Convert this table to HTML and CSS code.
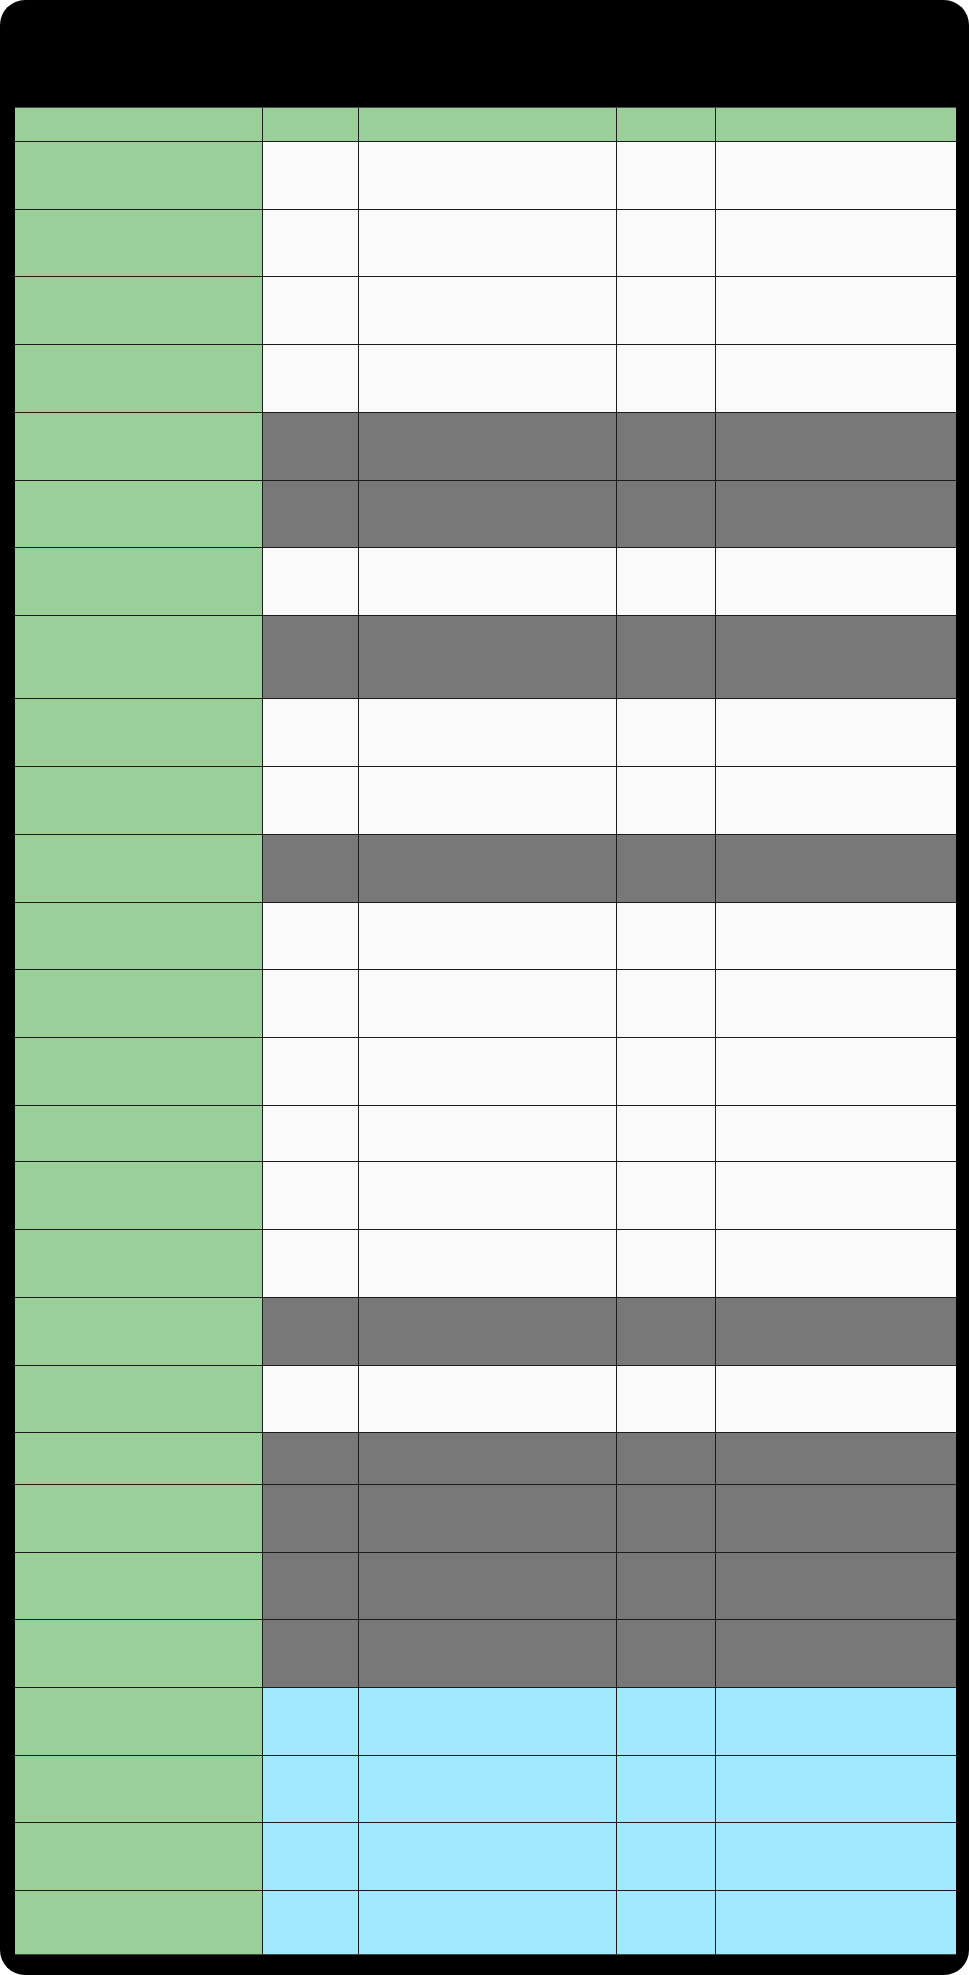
FILE: index.html
```html
<!DOCTYPE html>
<html lang="en">
<head>
<meta charset="utf-8">
<title>Table</title>
<link rel="stylesheet" href="styles.css">
</head>
<body>
<div class="frame">
  <div class="grid">
    <div class="row head"><span class="cell"></span><span class="cell"></span><span class="cell"></span><span class="cell"></span><span class="cell"></span></div>
    <div class="row light"><span class="cell"></span><span class="cell"></span><span class="cell"></span><span class="cell"></span><span class="cell"></span></div>
    <div class="row light"><span class="cell"></span><span class="cell"></span><span class="cell"></span><span class="cell"></span><span class="cell"></span></div>
    <div class="row light"><span class="cell"></span><span class="cell"></span><span class="cell"></span><span class="cell"></span><span class="cell"></span></div>
    <div class="row light"><span class="cell"></span><span class="cell"></span><span class="cell"></span><span class="cell"></span><span class="cell"></span></div>
    <div class="row dark"><span class="cell"></span><span class="cell"></span><span class="cell"></span><span class="cell"></span><span class="cell"></span></div>
    <div class="row dark"><span class="cell"></span><span class="cell"></span><span class="cell"></span><span class="cell"></span><span class="cell"></span></div>
    <div class="row light"><span class="cell"></span><span class="cell"></span><span class="cell"></span><span class="cell"></span><span class="cell"></span></div>
    <div class="row dark"><span class="cell"></span><span class="cell"></span><span class="cell"></span><span class="cell"></span><span class="cell"></span></div>
    <div class="row light"><span class="cell"></span><span class="cell"></span><span class="cell"></span><span class="cell"></span><span class="cell"></span></div>
    <div class="row light"><span class="cell"></span><span class="cell"></span><span class="cell"></span><span class="cell"></span><span class="cell"></span></div>
    <div class="row dark"><span class="cell"></span><span class="cell"></span><span class="cell"></span><span class="cell"></span><span class="cell"></span></div>
    <div class="row light"><span class="cell"></span><span class="cell"></span><span class="cell"></span><span class="cell"></span><span class="cell"></span></div>
    <div class="row light"><span class="cell"></span><span class="cell"></span><span class="cell"></span><span class="cell"></span><span class="cell"></span></div>
    <div class="row light"><span class="cell"></span><span class="cell"></span><span class="cell"></span><span class="cell"></span><span class="cell"></span></div>
    <div class="row light"><span class="cell"></span><span class="cell"></span><span class="cell"></span><span class="cell"></span><span class="cell"></span></div>
    <div class="row light"><span class="cell"></span><span class="cell"></span><span class="cell"></span><span class="cell"></span><span class="cell"></span></div>
    <div class="row light"><span class="cell"></span><span class="cell"></span><span class="cell"></span><span class="cell"></span><span class="cell"></span></div>
    <div class="row dark"><span class="cell"></span><span class="cell"></span><span class="cell"></span><span class="cell"></span><span class="cell"></span></div>
    <div class="row light"><span class="cell"></span><span class="cell"></span><span class="cell"></span><span class="cell"></span><span class="cell"></span></div>
    <div class="row dark"><span class="cell"></span><span class="cell"></span><span class="cell"></span><span class="cell"></span><span class="cell"></span></div>
    <div class="row dark"><span class="cell"></span><span class="cell"></span><span class="cell"></span><span class="cell"></span><span class="cell"></span></div>
    <div class="row dark"><span class="cell"></span><span class="cell"></span><span class="cell"></span><span class="cell"></span><span class="cell"></span></div>
    <div class="row dark"><span class="cell"></span><span class="cell"></span><span class="cell"></span><span class="cell"></span><span class="cell"></span></div>
    <div class="row blue"><span class="cell"></span><span class="cell"></span><span class="cell"></span><span class="cell"></span><span class="cell"></span></div>
    <div class="row blue"><span class="cell"></span><span class="cell"></span><span class="cell"></span><span class="cell"></span><span class="cell"></span></div>
    <div class="row blue"><span class="cell"></span><span class="cell"></span><span class="cell"></span><span class="cell"></span><span class="cell"></span></div>
    <div class="row blue"><span class="cell"></span><span class="cell"></span><span class="cell"></span><span class="cell"></span><span class="cell"></span></div>
  </div>
</div>
</body>
</html>
```

FILE: styles.css
```css
html, body {
  margin: 0;
  padding: 0;
  background: #ffffff;
  font-family: "Liberation Sans", Arial, sans-serif;
}

.frame {
  box-sizing: border-box;
  width: 969px;
  height: 1975px;
  background: #000000;
  border-radius: 25px;
  padding: 107px 13px 0 15px;
}

.grid {
  display: grid;
  grid-template-columns: 247px 95px 257px 98px 240px;
  grid-template-rows:
    33px
    67px 66px 67px 67px 67px 66px 67px 82px 67px 67px
    67px 66px 67px 67px 55px 67px 67px 67px 66px 51px
    67px 66px 67px 67px 66px 67px 63px;
  column-gap: 1px;
  row-gap: 1px;
  background: #1c1c1c;
  border-top: 1px solid #4d4d4d;
  border-bottom: 1px solid #3a4a3a;
}

.row {
  display: contents;
}

.cell {
  display: block;
  background: #9acf9a;
}

.row.light .cell {
  background: #fafafa;
}

.row.dark .cell {
  background: #787878;
}

.row.blue .cell {
  background: #a1e9fe;
}

.row .cell:first-child {
  background: #9acf9a;
}
```
